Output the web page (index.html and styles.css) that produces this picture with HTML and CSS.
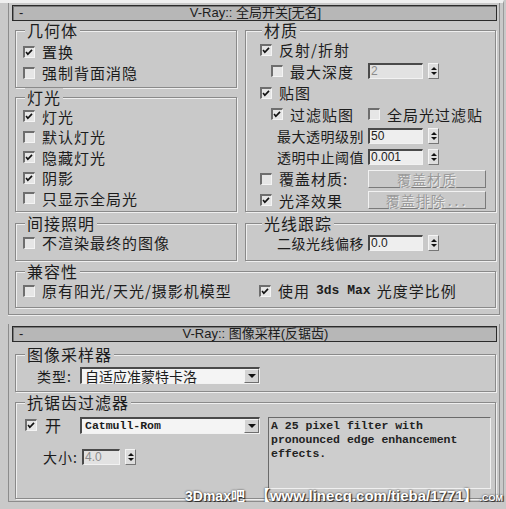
FILE: index.html
```html
<!DOCTYPE html>
<html lang="zh">
<head>
    <meta charset="UTF-8">
    <meta name="viewport" content="width=device-width, initial-scale=1.0">
    <title>V-Ray 设置</title>
    <link rel="stylesheet" href="styles.css">
</head>
<body>
    <div class="panel">
        <!-- Rollout 1: global switches -->
        <section class="rollout">
            <div class="roll-head"><span class="toggle">-</span><span class="roll-title">V-Ray:: 全局开关[无名]</span></div>
            <div class="roll-body">
                <div class="two-col">
                    <div class="col">
                        <fieldset class="group g-geo">
                            <legend>几何体</legend>
                            <div class="row"><span class="cb on"><svg viewBox="0 0 12 12"><polyline points="2.5,5.5 4.6,8.2 9.6,2.8"/></svg></span>置换</div>
                            <div class="row"><span class="cb"></span>强制背面消隐</div>
                        </fieldset>
                        <fieldset class="group g-light">
                            <legend>灯光</legend>
                            <div class="row"><span class="cb on"><svg viewBox="0 0 12 12"><polyline points="2.5,5.5 4.6,8.2 9.6,2.8"/></svg></span>灯光</div>
                            <div class="row"><span class="cb"></span>默认灯光</div>
                            <div class="row"><span class="cb on"><svg viewBox="0 0 12 12"><polyline points="2.5,5.5 4.6,8.2 9.6,2.8"/></svg></span>隐藏灯光</div>
                            <div class="row"><span class="cb on"><svg viewBox="0 0 12 12"><polyline points="2.5,5.5 4.6,8.2 9.6,2.8"/></svg></span>阴影</div>
                            <div class="row"><span class="cb"></span>只显示全局光</div>
                        </fieldset>
                    </div>
                    <fieldset class="group g-mat">
                        <legend>材质</legend>
                        <div class="row"><span class="cb on"><svg viewBox="0 0 12 12"><polyline points="2.5,5.5 4.6,8.2 9.6,2.8"/></svg></span>反射/折射</div>
                        <div class="row">
                            <span class="lab indent"><span class="cb"></span>最大深度</span>
                            <span class="num off">2</span><span class="spin"><i class="up"></i><i class="dn"></i></span>
                        </div>
                        <div class="row"><span class="cb on"><svg viewBox="0 0 12 12"><polyline points="2.5,5.5 4.6,8.2 9.6,2.8"/></svg></span>贴图</div>
                        <div class="row">
                            <span class="lab indent"><span class="cb on"><svg viewBox="0 0 12 12"><polyline points="2.5,5.5 4.6,8.2 9.6,2.8"/></svg></span>过滤贴图</span>
                            <span class="cb"></span>全局光过滤贴
                        </div>
                        <div class="row">
                            <span class="lab right">最大透明级别</span>
                            <span class="num">50</span><span class="spin"><i class="up"></i><i class="dn"></i></span>
                        </div>
                        <div class="row">
                            <span class="lab right">透明中止阈值</span>
                            <span class="num">0.001</span><span class="spin"><i class="up"></i><i class="dn"></i></span>
                        </div>
                        <div class="row">
                            <span class="lab"><span class="cb"></span>覆盖材质:</span>
                            <span class="btn">覆盖材质</span>
                        </div>
                        <div class="row">
                            <span class="lab"><span class="cb on"><svg viewBox="0 0 12 12"><polyline points="2.5,5.5 4.6,8.2 9.6,2.8"/></svg></span>光泽效果</span>
                            <span class="btn">覆盖排除<span class="dots">...</span></span>
                        </div>
                    </fieldset>
                    <fieldset class="group g-indirect">
                        <legend>间接照明</legend>
                        <div class="row"><span class="cb"></span>不渲染最终的图像</div>
                    </fieldset>
                    <fieldset class="group g-ray">
                        <legend>光线跟踪</legend>
                        <div class="row">
                            <span class="lab right">二级光线偏移</span>
                            <span class="num">0.0</span><span class="spin"><i class="up"></i><i class="dn"></i></span>
                        </div>
                    </fieldset>
                </div>
                <fieldset class="group g-compat">
                    <legend>兼容性</legend>
                    <div class="compat">
                        <div class="row"><span class="cb"></span>原有阳光/天光/摄影机模型</div>
                        <div class="row"><span class="cb on"><svg viewBox="0 0 12 12"><polyline points="2.5,5.5 4.6,8.2 9.6,2.8"/></svg></span>使用 <span class="mono">3ds Max</span> 光度学比例</div>
                    </div>
                </fieldset>
            </div>
        </section>

        <!-- Rollout 2: image sampler -->
        <section class="rollout second">
            <div class="roll-head"><span class="toggle">-</span><span class="roll-title">V-Ray:: 图像采样(反锯齿)</span></div>
            <div class="roll-body">
                <fieldset class="group g-sampler">
                    <legend>图像采样器</legend>
                    <div class="row">
                        <span class="type-lab">类型:</span>
                        <div class="select"><span class="sel-text">自适应准蒙特卡洛</span><span class="sel-btn"><i></i></span></div>
                    </div>
                </fieldset>
                <fieldset class="group g-filter">
                    <legend>抗锯齿过滤器</legend>
                    <div class="filter">
                        <div class="filter-left">
                            <div class="frow">
                                <span class="cb on"><svg viewBox="0 0 12 12"><polyline points="2.5,5.5 4.6,8.2 9.6,2.8"/></svg></span><span class="on-lab">开</span>
                                <div class="select"><span class="sel-text mono-sel">Catmull-Rom</span><span class="sel-btn"><i></i></span></div>
                            </div>
                            <div class="frow size-row">
                                <span class="size-lab">大小:</span>
                                <span class="num off small">4.0</span><span class="spin"><i class="up"></i><i class="dn"></i></span>
                            </div>
                        </div>
                        <div class="desc">A 25 pixel filter with<br>pronounced edge enhancement<br>effects.</div>
                    </div>
                </fieldset>
            </div>
        </section>
    </div>

    <div class="watermark">
        <span class="wm-a">3Dmax吧</span>
        <span class="wm-b">【www.linecg.com/tieba/1771】</span>
        <span class="wm-c">.COM</span>
    </div>
</body>
</html>
```

FILE: styles.css
```css
/* General styles */
body {
    margin: 0;
    background: #c9c9c9;
    font-family: "Noto Sans CJK SC", "Liberation Sans", sans-serif;
    color: #1c1c1c;
    position: relative;
    overflow: hidden;
}
.panel {
    width: 503px;
    border-top: 3px solid #efefef;
    border-right: 1px solid #9a9a9a;
}
.rollout {
    margin: 0 3px 0 8px;
    padding: 2px 2px 6px 3px;
    border-left: 1px solid #8c8c8c;
    border-right: 1px solid #8c8c8c;
    border-bottom: 1px solid #8c8c8c;
    box-shadow: 0 1px 0 #eeeeee;
}
.rollout.second {
    margin-top: 9px;
    padding-bottom: 2px;
}

/* Rollout title bar */
.roll-head {
    height: 16px;
    box-sizing: border-box;
    border: 1px solid #2b2b2b;
    box-shadow: inset 1px 1px 0 #7a7a7a;
    background: #b7b7b7;
    display: flex;
    align-items: center;
    font-family: "Liberation Sans", "Noto Sans CJK SC", sans-serif;
    font-size: 13px;
    line-height: 14px;
}
.toggle {
    width: 20px;
    padding-left: 6px;
    box-sizing: border-box;
}
.roll-title {
    flex: 1;
    text-align: center;
    margin-right: 18px;
}
.roll-body {
    margin: 0 1px 0 3px;
}

/* Group boxes */
.group {
    margin: 0;
    padding: 0 4px 4px 7px;
    border: 1px solid #8a8a8a;
    box-shadow: inset 1px 1px 0 #efefef, 1px 1px 0 #efefef;
    min-width: 0;
}
.group legend {
    padding: 0 2px;
    margin-left: 2px;
    font-size: 16px;
    line-height: 18px;
    letter-spacing: 1px;
    background: #c9c9c9;
}
.two-col {
    display: grid;
    grid-template-columns: 222px 251px;
    column-gap: 8px;
    row-gap: 2px;
}
.col {
    display: flex;
    flex-direction: column;
}
.g-geo {
    padding-top: 2px;
    padding-bottom: 4px;
}
.g-light {
    flex: 1;
    padding-bottom: 2px;
}
.g-mat,
.g-ray {
    padding-left: 14px;
    padding-bottom: 0;
}
.g-indirect,
.g-ray {
    padding-bottom: 7px;
}
.g-compat {
    margin-top: 1px;
    padding-bottom: 6px;
}

/* Rows and controls */
.row {
    display: flex;
    align-items: center;
    height: 21px;
    white-space: nowrap;
    font-size: 15px;
    letter-spacing: 1px;
}
.g-light .row {
    height: 20.5px;
}
.g-mat .row {
    height: 21.5px;
}
.cb {
    flex: none;
    width: 12px;
    height: 12px;
    box-sizing: border-box;
    margin-right: 7px;
    border-top: 2px solid #6e6e6e;
    border-left: 2px solid #6e6e6e;
    border-right: 1px solid #f4f4f4;
    border-bottom: 1px solid #f4f4f4;
    background: #e6e6e6;
    display: flex;
}
.cb svg {
    width: 11px;
    height: 11px;
    margin: -1px 0 0 -1px;
}
.cb polyline {
    fill: none;
    stroke: #111;
    stroke-width: 2;
}
.lab {
    flex: none;
    width: 108px;
    box-sizing: border-box;
    display: flex;
    align-items: center;
}
.lab.indent {
    padding-left: 11px;
}
.lab.right {
    justify-content: flex-end;
    padding-right: 4px;
    font-size: 14px;
    letter-spacing: 0.5px;
}
.num {
    flex: none;
    width: 55px;
    height: 16px;
    box-sizing: border-box;
    border-top: 2px solid #4a4a4a;
    border-left: 2px solid #4a4a4a;
    border-right: 1px solid #f2f2f2;
    border-bottom: 1px solid #f2f2f2;
    background: #eeeeee;
    padding-left: 1px;
    font-family: "Liberation Sans", sans-serif;
    font-size: 12px;
    line-height: 13px;
    letter-spacing: 0;
    color: #1c1c1c;
}
.num.off {
    color: #8c8c8c;
    background: #e2e2e2;
}
.num.small {
    width: 38px;
}
.spin {
    flex: none;
    width: 11px;
    height: 16px;
    box-sizing: border-box;
    margin-left: 5px;
    border: 1px solid;
    border-color: #f4f4f4 #767676 #767676 #f4f4f4;
    background: #dedede;
    display: flex;
    flex-direction: column;
    align-items: center;
    justify-content: center;
    gap: 2px;
}
.spin i {
    width: 0;
    height: 0;
    border-left: 3px solid transparent;
    border-right: 3px solid transparent;
}
.spin .up {
    border-bottom: 3px solid #111;
}
.spin .dn {
    border-top: 3px solid #111;
}
.btn {
    flex: none;
    width: 118px;
    height: 18px;
    box-sizing: border-box;
    border: 1px solid;
    border-color: #f2f2f2 #7a7a7a #7a7a7a #f2f2f2;
    display: flex;
    align-items: center;
    justify-content: center;
    font-size: 14px;
    letter-spacing: 1px;
    color: #9a9a9a;
    text-shadow: 1px 1px 0 #ececec;
}
.dots {
    letter-spacing: 3px;
    margin-left: 2px;
}
.compat {
    display: grid;
    grid-template-columns: 236px 1fr;
}
.mono {
    font-family: "Liberation Mono", monospace;
    font-weight: bold;
    font-size: 13px;
    letter-spacing: 0;
    margin: 0 6px;
}

/* Image sampler rollout */
.g-sampler {
    margin-top: 3px;
    padding-bottom: 3px;
}
.g-sampler .row {
    height: 25px;
}
.type-lab {
    width: 57px;
    text-align: right;
    padding-right: 8px;
    box-sizing: border-box;
    font-size: 14px;
}
.select {
    flex: none;
    width: 180px;
    height: 17px;
    box-sizing: border-box;
    border-top: 2px solid #4a4a4a;
    border-left: 2px solid #4a4a4a;
    border-right: 1px solid #f2f2f2;
    border-bottom: 1px solid #f2f2f2;
    background: #f4f4f4;
    display: flex;
    align-items: center;
}
.sel-text {
    flex: 1;
    padding-left: 3px;
    font-size: 14px;
    line-height: 14px;
    letter-spacing: 0;
}
.mono-sel {
    font-family: "Liberation Mono", monospace;
    font-weight: bold;
    font-size: 11.5px;
}
.sel-btn {
    width: 15px;
    height: 100%;
    box-sizing: border-box;
    border: 1px solid;
    border-color: #f4f4f4 #6e6e6e #6e6e6e #f4f4f4;
    background: #d4d4d4;
    display: flex;
    align-items: center;
    justify-content: center;
}
.sel-btn i {
    border-left: 4px solid transparent;
    border-right: 4px solid transparent;
    border-top: 4px solid #111;
}
.g-filter {
    margin-top: 1px;
    padding-bottom: 9px;
}
.filter {
    display: flex;
    gap: 8px;
    padding-top: 6px;
}
.filter-left {
    width: 237px;
}
.frow {
    display: flex;
    align-items: center;
    height: 16px;
}
.frow .cb {
    margin-left: 2px;
    margin-right: 8px;
}
.on-lab {
    width: 35px;
    font-size: 16px;
}
.size-row {
    margin-top: 16px;
}
.size-lab {
    width: 59px;
    text-align: right;
    padding-right: 4px;
    box-sizing: border-box;
    font-size: 14px;
    letter-spacing: 1px;
}
.desc {
    width: 225px;
    height: 72px;
    box-sizing: border-box;
    border: 1px solid;
    border-color: #6a6a6a #f0f0f0 #f0f0f0 #6a6a6a;
    background: #cdcdcd;
    padding: 1px 2px;
    font-family: "Liberation Mono", monospace;
    font-weight: bold;
    font-size: 11.5px;
    line-height: 14px;
    color: #222;
}

/* Watermark over the bottom edge */
.watermark {
    position: absolute;
    left: 185px;
    top: 484px;
    display: flex;
    align-items: baseline;
    color: #fff;
    font-family: "Liberation Sans", "Noto Sans CJK SC", sans-serif;
    font-weight: bold;
    text-shadow: 0 0 2px #333, 1px 1px 1px #222;
    white-space: nowrap;
}
.wm-a {
    font-size: 14px;
}
.wm-b {
    font-size: 15px;
    margin-left: 10px;
}
.wm-c {
    font-size: 9px;
    margin-left: 1px;
}
```
